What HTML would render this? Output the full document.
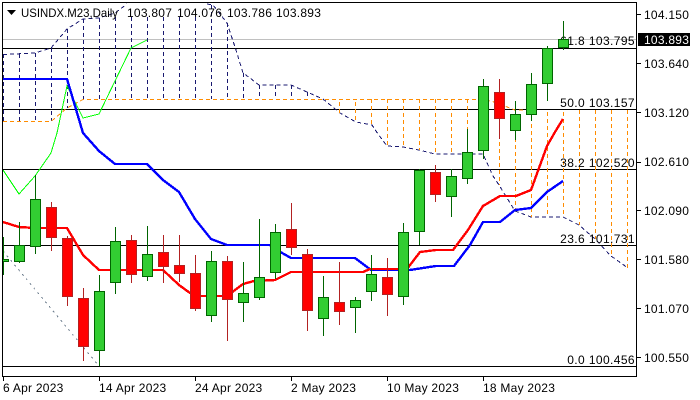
<!DOCTYPE html>
<html><head><meta charset="utf-8"><style>
html,body{margin:0;padding:0;background:#fff;width:700px;height:400px;overflow:hidden}
svg{display:block}
text{font-family:"Liberation Sans",sans-serif;font-size:12px;letter-spacing:.25px;fill:#000}
.l{letter-spacing:.4px}
</style></head><body>
<svg width="700" height="400" viewBox="0 0 700 400" xmlns="http://www.w3.org/2000/svg">
<defs><clipPath id="c"><rect x="3" y="3" width="633" height="373"/></clipPath></defs>
<rect width="700" height="400" fill="#fff"/>
<g clip-path="url(#c)">
<g fill="none" stroke-width="1" shape-rendering="crispEdges">
<path stroke="#c0c0c0" d="M3 39.5H636"/>
<path stroke="#000" d="M3 48.5H636M3 109.5H636M3 169.5H636M3 245.5H636M3 366.5H636"/>
<!-- navy hatch -->
<path stroke="#191970" stroke-dasharray="4 3" d="M3.5 54V121M19.5 54V121M35.5 53V121M51.5 48V121M67.5 29V108M83.5 19V99M99.5 18V99M115.5 17V99M131.5 17V99M147.5 17V99M163.5 17V99M179.5 17V99M195.5 17V99M211.5 5V99M227.5 23V99M243.5 73V99M259.5 85V99M275.5 85V99M291.5 85V99M307.5 92V99"/>
<path stroke="#191970" stroke-dasharray="4 3" d="M3 54.500L35 53L51 48L67 29L83 19L99 18L115 13L123 7L127 4M207 4L213 5L227 23L236 50L243 73L250 78L259 85H291L307 92L323 99L340 113L356 122L372 125L378 134L387 146L403 147L419 150L427 152L435 154H483L493 176L499 185L515 211L531 217H563L579 225L595 239L611 256L628 268"/>
<!-- orange hatch -->
<path stroke="#ff8c00" stroke-dasharray="4 3" d="M3 121.500H51L67 108L83 99.500H483L499 103L507 107L515 110L531 109.500"/>
<path stroke="#ff8c00" stroke-dasharray="4 3" d="M339.500 102V113M355.500 102V122M371.500 99V125M387.500 99V146M403.500 99V147M419.500 99V150M435.500 99V154M451.500 99V154M467.500 99V154M483.500 99V155M499.500 100V185M515.500 110V211M531.500 110V217M547.500 112V217M563.500 112V217M579.500 110V225M595.500 110V239M611.500 110V256M627.500 110V268"/>
<path stroke="#708090" stroke-dasharray="2 4" d="M3 251L99 366"/>
<path stroke="#00ff00" d="M3 170L19 194L35 176L51 153L57 133L67 86L83 118L99 114L131 48L147 40"/>
<path stroke="#0000ff" stroke-width="2.4" d="M3 79H67L83 133L99 151L115 164H147L163 180L179 192L195 219L211 239L227 245H270L275 249L291 258H355L371 270H410L436 266H454L470 245L483 222H500L515 210L531 208L547 192L563 181"/>
<path stroke="#ff0000" stroke-width="2.4" d="M3 222L19 227L35 228H67L83 255L99 270H163L179 285L190 293L195 296H227L243 284L254 281L275 280L291 272H363L370 269H407L420 252L436 250H453L468 230L483 206L500 196H516L531 190L547 146L555 132L563 119"/>
</g>
<text class="l" x="635" y="45" text-anchor="end">61.8 103.795</text>
<text class="l" x="635" y="107" text-anchor="end">50.0 103.157</text>
<text class="l" x="635" y="167" text-anchor="end">38.2 102.520</text>
<text class="l" x="635" y="243" text-anchor="end">23.6 101.731</text>
<text class="l" x="635" y="364" text-anchor="end">0.0 100.456</text>
<g shape-rendering="crispEdges" stroke-width="1">
<path fill="none" stroke="#006400" d="M3.500 237V275M19.500 222V263M35.500 175V254M99.500 275V366M115.500 227V294M147.500 226V281M211.500 251V322M243.500 262V322M259.500 219V300M275.500 224V279M323.500 276V336M355.500 297V333M371.500 255V301M403.500 223V305M419.500 169V245M451.500 169V217M467.500 129V184M483.500 79V159M515.500 101V140M531.500 73V121M547.500 46V101M563.500 21V50"/>
<path fill="none" stroke="#b22222" d="M51.500 202V251M67.500 236V306M83.500 288V361M131.500 235V283M163.500 235V283M179.500 235V282M195.500 255V311M227.500 256V341M291.500 203V255M307.500 249V331M339.500 262V325M387.500 258V316M435.500 165V202M499.500 79V139"/>
<path fill="#32cd32" stroke="#006400" d="M-1.500 259.500h10v2h-10zM14.500 245.500h10v16h-10zM30.500 199.500h10v47h-10zM94.500 291.500h10v59h-10zM110.500 241.500h10v41h-10zM142.500 254.500h10v22h-10zM206.500 261.500h10v54h-10zM238.500 293.500h10v9h-10zM254.500 277.500h10v20h-10zM270.500 232.500h10v40h-10zM318.500 297.500h10v21h-10zM350.500 300.500h10v7h-10zM366.500 274.500h10v17h-10zM398.500 232.500h10v64h-10zM414.500 170.500h10v61h-10zM446.500 176.500h10v20h-10zM462.500 152.500h10v26h-10zM478.500 86.500h10v64h-10zM510.500 114.500h10v16h-10zM526.500 84.500h10v30h-10zM542.500 48.500h10v35h-10zM558.500 39.500h10v8h-10z"/>
<path fill="#ff0000" stroke="#b22222" d="M46.500 207.500h10v30h-10zM62.500 238.500h10v58h-10zM78.500 298.500h10v48h-10zM126.500 240.500h10v34h-10zM158.500 252.500h10v14h-10zM174.500 265.500h10v8h-10zM190.500 273.500h10v35h-10zM222.500 261.500h10v38h-10zM286.500 229.500h10v18h-10zM302.500 254.500h10v56h-10zM334.500 302.500h10v9h-10zM382.500 277.500h10v17h-10zM430.500 172.500h10v22h-10zM494.500 92.500h10v26h-10z"/>
</g>
</g>
<path shape-rendering="crispEdges" fill="none" stroke="#000" d="M2.500 2.500H636.500V376.500H2.500zM636 14.500H641M636 63.500H641M636 112.500H641M636 162.500H641M636 210.500H641M636 259.500H641M636 308.500H641M636 357.500H641M3.500 377V381M99.500 377V381M195.500 377V381M291.500 377V381M387.500 377V381M483.500 377V381"/>
<path d="M7 10H16L11.500 15z" fill="#000"/>
<text x="21" y="17" textLength="97" lengthAdjust="spacingAndGlyphs" style="letter-spacing:0">USINDX.M23,Daily</text>
<text x="127" y="17">103.807</text>
<text x="177" y="17">104.076</text>
<text x="227" y="17">103.786</text>
<text x="276" y="17">103.893</text>
<text x="644" y="19">104.150</text>
<rect x="638" y="33" width="52" height="13" fill="#000"/>
<text x="644" y="44" style="fill:#fff">103.893</text>
<text x="644" y="68">103.640</text>
<text x="644" y="117">103.120</text>
<text x="644" y="166">102.610</text>
<text x="644" y="215">102.090</text>
<text x="644" y="264">101.580</text>
<text x="644" y="313">101.070</text>
<text x="644" y="362">100.550</text>
<text x="3" y="392">6 Apr 2023</text>
<text x="99" y="392">14 Apr 2023</text>
<text x="195" y="392">24 Apr 2023</text>
<text x="291" y="392">2 May 2023</text>
<text x="387" y="392">10 May 2023</text>
<text x="483" y="392">18 May 2023</text>
</svg>
</body></html>
